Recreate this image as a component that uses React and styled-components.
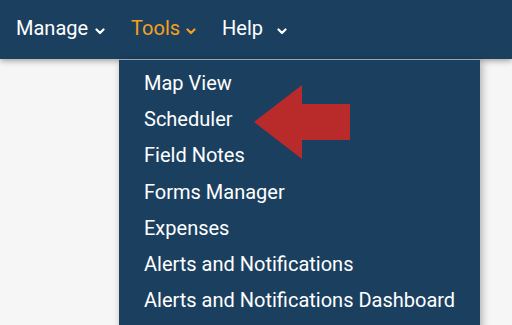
import styled, { createGlobalStyle } from 'styled-components';

const GlobalStyle = createGlobalStyle`
  html, body {
    margin: 0;
    padding: 0;
    background: #f6f6f6;
    font-family: Roboto, "Liberation Sans", sans-serif;
    overflow: hidden;
  }
`;

const Page = styled.div`
  width: 512px;
  height: 325px;
  position: relative;
  overflow: hidden;
  background: #f6f6f6;
`;

const NavBar = styled.nav`
  height: 59px;
  background: #1b3f5f;
  display: flex;
  align-items: center;
  padding-left: 16px;
  box-shadow: 0 2px 6px rgba(0, 0, 0, 0.35);
  position: relative;
  z-index: 2;
`;

const NavItem = styled.div`
  display: flex;
  align-items: center;
  margin-right: ${(p) => p.gap}px;
  color: ${(p) => (p.active ? '#f5a11c' : '#ffffff')};
  font-size: 20px;
  font-weight: 400;
  padding-bottom: 3px;
`;

const Chevron = styled.svg`
  margin-left: ${(p) => p.offset}px;
  margin-top: 7px;
`;

const Dropdown = styled.ul`
  position: absolute;
  top: 59px;
  left: 119px;
  width: 361px;
  height: 280px;
  margin: 0;
  padding: 5px 0 0 25px;
  box-sizing: border-box;
  list-style: none;
  background: #1b3f5f;
  border-top: 1px solid #9aa6b0;
  box-shadow: 2px 2px 8px rgba(0, 0, 0, 0.3);
  z-index: 3;
`;

const MenuItem = styled.li`
  height: 36.2px;
  display: flex;
  align-items: center;
  color: #ffffff;
  font-size: 20px;
  font-weight: 400;
`;

const Arrow = styled.svg`
  position: absolute;
  left: 253px;
  top: 84px;
  z-index: 4;
`;

const ChevronIcon = ({ color, offset }) => (
  <Chevron offset={offset} width="10" height="7" viewBox="0 0 10 7">
    <path d="M1.5 1.5 L5 5 L8.5 1.5" fill="none" stroke={color} strokeWidth="2.2" strokeLinecap="round" strokeLinejoin="round" />
  </Chevron>
);

const items = [
  'Map View',
  'Scheduler',
  'Field Notes',
  'Forms Manager',
  'Expenses',
  'Alerts and Notifications',
  'Alerts and Notifications Dashboard',
];

export default function App() {
  return (
    <Page>
      <GlobalStyle />
      <NavBar>
        <NavItem gap={26}>
          Manage
          <ChevronIcon color="#ffffff" offset={7} />
        </NavItem>
        <NavItem active gap={26}>
          Tools
          <ChevronIcon color="#f5a11c" offset={6} />
        </NavItem>
        <NavItem gap={0}>
          Help
          <ChevronIcon color="#ffffff" offset={14} />
        </NavItem>
      </NavBar>
      <Dropdown>
        {items.map((item) => (
          <MenuItem key={item}>{item}</MenuItem>
        ))}
      </Dropdown>
      <Arrow width="98" height="76" viewBox="0 0 98 76">
        <polygon points="1,38 49,1 49,20 97,20 97,56 49,56 49,75" fill="#b92b2b" />
      </Arrow>
    </Page>
  );
}
